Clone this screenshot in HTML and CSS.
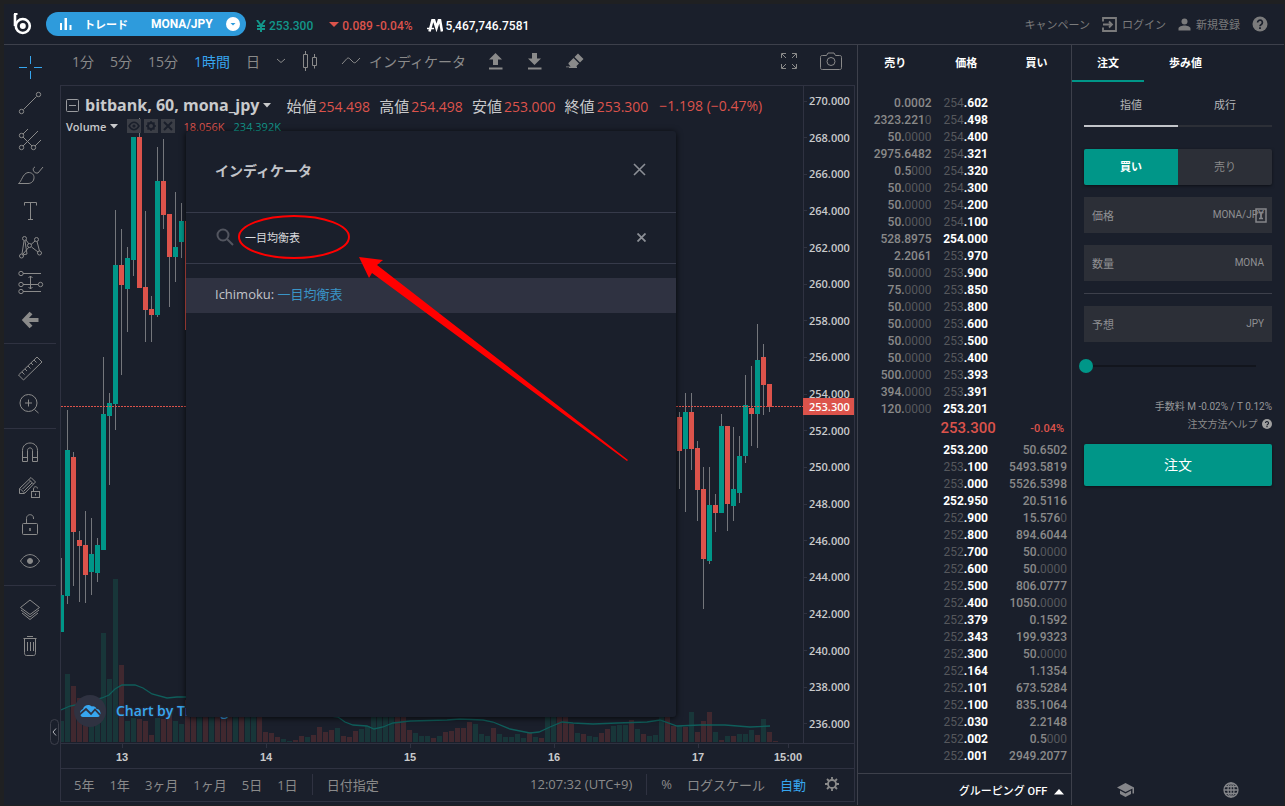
FILE: index.html
```html
<!DOCTYPE html>
<html lang="ja">
<head>
<meta charset="utf-8">
<title>bitbank MONA/JPY</title>
<link rel="stylesheet" href="styles.css">
</head>
<body>

<div class="app">

	<header class="header">
		<a class="logo" href="#" aria-label="bitbank">
			<svg width="20" height="22" viewBox="0 0 20 22"><path d="M2 1v12" stroke="#fff" stroke-width="2.600" fill="none"/><path d="M1 1h3.500" stroke="#fff" stroke-width="2"/><circle cx="9.800" cy="13" r="7" stroke="#fff" stroke-width="2.600" fill="none"/><circle cx="9.800" cy="13" r="3" fill="#fff"/></svg>
		</a>
		<button class="pair">
			<svg width="12" height="12" viewBox="0 0 12 12" fill="#fff"><path d="M0 5h2v7H0zM4.500 0h2.500v12H4.500zM9.500 7h2v5h-2z"/></svg>
			<span class="pair-mode">トレード</span>
			<span class="pair-name">MONA/JPY</span>
			<svg width="14" height="14" viewBox="0 0 14 14"><circle cx="7" cy="7" r="7" fill="#fff"/><path d="M4.500 6h5L7 8.500z" fill="#2e9bdc"/></svg>
		</button>
		<span class="ticker up">
			<svg width="10" height="12" viewBox="0 0 10 12"><path d="M1 0l4 5.500L9 0M5 5v7M1 6h8M1 9h8" fill="none" stroke="#12968a" stroke-width="2"/></svg>
			253.300
		</span>
		<span class="ticker down">
			<svg width="10" height="10" viewBox="0 0 10 10"><path d="M0 1h10L5 6z" fill="#dc534b"/></svg>
			0.089 -0.04%
		</span>
		<span class="ticker balance">
			<svg width="16" height="13" viewBox="0 0 16 13"><path d="M2.500 12.500L5.500 1h1.500l2.500 8 2.500-8h1l2 11.500" fill="none" stroke="#fff" stroke-width="2.600"/><path d="M0 9.500h7" stroke="#fff" stroke-width="1.500"/></svg>
			5,467,746.7581
		</span>
		<nav class="menu">
			<a href="#">キャンペーン</a>
			<a href="#"><svg width="15" height="15" viewBox="0 0 15 15" fill="none" stroke="#7b7b7c" stroke-width="1.800"><path d="M1 4.500V1h13v13H1v-3.500M1 7.500h8.500M7 4.500l3 3-3 3"/></svg>ログイン</a>
			<a href="#"><svg width="13" height="13" viewBox="0 0 13 13" fill="#7b7b7c"><circle cx="6.500" cy="3.500" r="3"/><path d="M0.500 12.500v-2c0-2 3.500-3 6-3s6 1 6 3v2z"/></svg>新規登録</a>
			<a href="#" aria-label="ヘルプ"><svg width="16" height="16" viewBox="0 0 16 16"><circle cx="8" cy="8" r="7.500" fill="#7b7b7c"/><path d="M5.600 6.500a2.400 2.400 0 1 1 3.700 2C8.300 9.100 8 9.400 8 10.300" fill="none" stroke="#1a1f2b" stroke-width="1.700"/><path d="M7.100 11.300h1.800V13H7.100z" fill="#1a1f2b"/></svg></a>
		</nav>
	</header>

	<main class="main">

		<section class="widget">
			<div class="tools">
				<button class="tool active" aria-label="十字"><svg viewBox="0 0 28 28"><path d="M14.500 3v8M14.500 18v8M3 14.500h8M18 14.500h8"/></svg></button>
				<button class="tool" aria-label="トレンドライン"><svg viewBox="0 0 28 28"><path d="M7.500 20.500l13-13"/><circle cx="5.500" cy="22.500" r="2.200"/><circle cx="22.500" cy="5.500" r="2.200"/></svg></button>
				<button class="tool" aria-label="ピッチフォーク"><svg viewBox="0 0 28 28"><path d="M7 9L12 4M7 21L22 6M19 21l6-6M7 12l9 9"/><circle cx="5.500" cy="10.500" r="2.200"/><circle cx="5.500" cy="22.500" r="2.200"/><circle cx="17.500" cy="22.500" r="2.200"/></svg></button>
				<button class="tool" aria-label="ブラシ"><svg viewBox="0 0 28 28"><path d="M2.500 22.500c3-1.500 4-10 9.500-11 4 0 6 2 6 5 0 4-3 6-6 6zM19 6c-3 1-2 5 1 6h2l5-6"/></svg></button>
				<button class="tool" aria-label="テキスト"><svg viewBox="0 0 28 28"><path d="M8.500 8.500v-3h12v3M14.500 5.500v17M12 22.500h5"/></svg></button>
				<button class="tool" aria-label="パターン"><svg viewBox="0 0 28 28"><path d="M6 21l2-13M9 8l2 13-4.500 1M10 7l3 4M19 8l-4 3.500M21 8.500l2.500 9.500M7 21l6-7M15.500 14l6.500 5"/><circle cx="8.500" cy="5.500" r="2"/><circle cx="20.500" cy="6.500" r="2"/><circle cx="13.500" cy="12.500" r="2"/><circle cx="5.500" cy="23" r="2"/><circle cx="23.500" cy="20" r="2"/></svg></button>
				<button class="tool" aria-label="予測"><svg viewBox="0 0 28 28"><path d="M7 4.500h18M7 15.500h15M7 22.500h18M14.500 7v13M12.500 9l2-2 2 2M12.500 18l2 2 2-2"/><circle cx="5" cy="4.500" r="2.200"/><circle cx="5" cy="15.500" r="2.200"/><circle cx="24.500" cy="15.500" r="2.200"/><circle cx="5" cy="22.500" r="2.200"/></svg></button>
				<button class="tool" aria-label="矢印"><svg viewBox="0 0 28 28"><path d="M15 8l-6.500 7 6.500 7M9 15h13.500" stroke-width="4"/></svg></button>
				<hr>
				<button class="tool" aria-label="定規"><svg viewBox="0 0 28 28"><path d="M2.500 21L21 3l5 5L7.500 26zM6 18l2.500 2.500M9 15l2 2M12 12l2.500 2.500M15 9l2 2M18 6l2.500 2.500"/></svg></button>
				<button class="tool" aria-label="拡大"><svg viewBox="0 0 28 28"><circle cx="12.500" cy="13" r="8.500"/><path d="M12.500 9.500v7M9 13h7M18.500 19.500l4 3.500"/></svg></button>
				<hr>
				<button class="tool" aria-label="マグネット"><svg viewBox="0 0 28 28"><path d="M6.500 22.500v-11c0-10 15-10 15 0v11h-5v-11c0-3.500-5-3.500-5 0v11zM6.500 18.500h5M16.500 18.500h5"/></svg></button>
				<button class="tool" aria-label="描画モード"><svg viewBox="0 0 28 28"><path d="M3.500 18.500v-5L15 2.500l4.500 4.500-11 11.500zM13 4.500l4.500 4.500M4 13.500l4.500 4.500M6.500 14l8-8M8 16l8-8"/><rect x="15.500" y="16.500" width="8" height="6"/><path d="M17.500 16.500V14c0-3 4-3 4-.5M19.500 18.500v2"/></svg></button>
				<button class="tool" aria-label="ロック"><svg viewBox="0 0 28 28"><rect x="6.500" y="12.500" width="15" height="11" rx="1"/><path d="M10.500 12.500V7.500c0-5 7-5 7-.5v1"/><path d="M14 17v3" stroke-width="1.600"/></svg></button>
				<button class="tool" aria-label="表示"><svg viewBox="0 0 28 28"><path d="M4.500 14c5-8.500 14-8.500 19 0-5 8.500-14 8.500-19 0z"/><circle cx="14" cy="14" r="2.500" fill="#8a8a8a"/></svg></button>
				<hr>
				<button class="tool" aria-label="レイヤー"><svg viewBox="0 0 28 28"><path d="M4.500 11.500l9.500-7.500 9.500 7.500-9.500 7zM5 14l9 7 9-7M6 17l8 6.500 8-6.500"/></svg></button>
				<button class="tool" aria-label="削除"><svg viewBox="0 0 28 28"><path d="M7.500 6.500h13M11 4.500h6M8.500 6.500v14c0 2 .5 3 2 3h7c1.500 0 2-1 2-3v-14M11.500 10v9M14.500 10v9M17.500 10v9"/></svg></button>
			</div>

			<div class="chart-side">
				<div class="topbar">
					<button>1分</button>
					<button>5分</button>
					<button>15分</button>
					<button class="active">1時間</button>
					<button>日</button>
					<button aria-label="時間足"><svg width="10" height="6" viewBox="0 0 10 6"><path d="M1 1l4 3.500L9 1"/></svg></button>
					<button class="kind" aria-label="チャート種類"><svg width="14" height="20" viewBox="0 0 14 20"><path d="M.5 3.500h4v13h-4zM2.500 0v3.500M2.500 16.500V20M9.500 6.500h4v8h-4zM11.500 3v3.500M11.500 14.500v3"/></svg></button>
					<button class="indicator"><svg width="20" height="10" viewBox="0 0 20 10"><path d="M1 8l5-5.500c1-.8 2-.6 3 .5l3 3c1 1 2 1 3 .2L19 2"/></svg>インディケータ</button>
					<button class="solid" aria-label="保存"><svg width="15" height="17" viewBox="0 0 15 17"><path d="M7.500 0L14 6.500h-4V12H5V6.500H1zM1 14.500h13.500v2H1z"/></svg></button>
					<button class="solid" aria-label="読込"><svg width="15" height="17" viewBox="0 0 15 17"><path d="M5 0h5v5.500h4L7.500 12 1 5.500h4zM1 14.500h13.500v2H1z"/></svg></button>
					<button class="solid" aria-label="消去"><svg width="18" height="16" viewBox="0 0 18 16"><path d="M12 .5L17.500 6 14 9.500 8.500 4zM7.500 5L13 10.500l-3.500 3.500H5L2.500 11v-1zM0 13.500h11V15H3v-.7H0z"/></svg></button>
					<span class="spacer"></span>
					<button class="full" aria-label="全画面"><svg width="18" height="18" viewBox="0 0 18 18"><path d="M1.500 6V1.500H6M12 1.500h4.500V6M16.500 12v4.500H12M6 16.500H1.500V12M2 2l4 4M16 2l-4 4M16 16l-4-4M2 16l4-4"/></svg></button>
					<button class="camera" aria-label="スナップショット"><svg width="22" height="18" viewBox="0 0 22 18"><path d="M2.500 3.500h4L8 1h6l1.500 2.500h4c1.500 0 2 .5 2 2v10c0 1.500-.5 2-2 2h-17c-1.500 0-2-.5-2-2v-10c0-1.500.5-2 2-2z"/><circle cx="11" cy="9.500" r="4"/></svg></button>
				</div>

				<div class="chart-box">
					<div class="pane">
						<svg class="plot" id="plot" viewBox="61 86 742 657" preserveAspectRatio="none"></svg>
						<div class="legend">
							<div class="legend-main">
								<svg width="13" height="13" viewBox="0 0 13 13" fill="none" stroke="#9a9b9f"><rect x=".5" y=".5" width="12" height="12" rx="1"/><path d="M3 6.500h7"/></svg>
								<strong>bitbank, 60, mona_jpy</strong>
								<svg width="8" height="5" viewBox="0 0 8 5"><path d="M0 0h8L4 4.500z" fill="#c9cacc"/></svg>
								<span class="ohlc">始値<b>254.498</b></span>
								<span class="ohlc">高値<b>254.498</b></span>
								<span class="ohlc">安値<b>253.000</b></span>
								<span class="ohlc">終値<b>253.300</b></span>
								<span class="ohlc"><b>−1.198 (−0.47%)</b></span>
							</div>
							<div class="legend-volume">
								<strong>Volume</strong>
								<svg width="8" height="5" viewBox="0 0 8 5"><path d="M0 0h8L4 4.500z" fill="#c9cacc"/></svg>
								<span class="study-icons">
									<svg width="14" height="14" viewBox="0 0 14 14"><rect width="14" height="14" fill="#3b3e46"/><path d="M2 7c3-5 7-5 10 0-3 5-7 5-10 0z" fill="none" stroke="#1a1f2b" stroke-width="1.500"/><circle cx="7" cy="7" r="1.600" fill="#1a1f2b"/></svg>
									<svg width="14" height="14" viewBox="0 0 14 14"><rect width="14" height="14" fill="#3b3e46"/><circle cx="7" cy="7" r="3" fill="none" stroke="#1a1f2b" stroke-width="2"/><path d="M7 2v2M7 10v2M2 7h2M10 7h2M3.500 3.500l1.500 1.500M9 9l1.500 1.500M10.500 3.500L9 5M5 9l-1.500 1.500" stroke="#1a1f2b" stroke-width="1.500"/></svg>
									<svg width="14" height="14" viewBox="0 0 14 14"><rect width="14" height="14" fill="#3b3e46"/><path d="M3 3l8 8M11 3l-8 8" stroke="#1a1f2b" stroke-width="2"/></svg>
								</span>
								<span class="red">18.056K</span>
								<span class="green">234.392K</span>
							</div>
						</div>
						<a class="credit" href="#">
							<span class="credit-logo"><svg width="22" height="14" viewBox="0 0 22 14"><path d="M1 9c0-2 1-3 3-4 1-4 6-5.500 9-2.500 2-.5 4 .5 4.500 2.500 2.500 0 4 2 4 4.500 0 2-1 3.500-3 3.500H4c-2 0-3-2-3-4z" fill="#37a6ef"/><path d="M0 11l7-6 5 5 4-4.500 7 7.500" fill="none" stroke="#2f3241" stroke-width="1.800"/></svg></span>
							<span>Chart by TradingView</span>
						</a>
					</div>
					<div class="price-axis">
						<span>270.000</span><span>268.000</span><span>266.000</span><span>264.000</span><span>262.000</span><span>260.000</span><span>258.000</span><span>256.000</span><span>254.000</span><span>252.000</span><span>250.000</span><span>248.000</span><span>246.000</span><span>244.000</span><span>242.000</span><span>240.000</span><span>238.000</span><span>236.000</span>
						<em>253.300</em>
					</div>
					<div class="time-axis">
						<span>13</span><span>14</span><span>15</span><span>16</span><span>17</span><span>15:00</span>
					</div>
					<div class="bottombar">
						<button>5年</button>
						<button>1年</button>
						<button>3ヶ月</button>
						<button>1ヶ月</button>
						<button>5日</button>
						<button>1日</button>
						<i></i>
						<button>日付指定</button>
						<span class="spacer"></span>
						<span>12:07:32 (UTC+9)</span>
						<i></i>
						<button>%</button>
						<button>ログスケール</button>
						<button class="active">自動</button>
						<button class="gear" aria-label="設定"><svg width="14" height="14" viewBox="0 0 14 14" fill="none" stroke="#8a8a8a"><circle cx="7" cy="7" r="4" stroke-width="1.800"/><path d="M7 0v3M7 11v3M0 7h3M11 7h3M2 2l2 2M10 10l2 2M12 2l-2 2M4 10l-2 2" stroke-width="1.800"/></svg></button>
					</div>
				</div>
			</div>

			<button class="collapse" aria-label="閉じる"><svg width="5" height="8" viewBox="0 0 5 8"><path d="M4 .5L1 4l3 3.500" fill="none" stroke="#b0b2b8"/></svg></button>

			<div class="dialog" role="dialog" aria-labelledby="dialog-title">
				<div class="dialog-head">
					<h2 id="dialog-title">インディケータ</h2>
					<button aria-label="閉じる"><svg width="13" height="13" viewBox="0 0 13 13"><path d="M1 1l11 11M12 1L1 12" stroke="#8c8f96" stroke-width="1.600"/></svg></button>
				</div>
				<div class="dialog-search">
					<svg width="18" height="18" viewBox="0 0 18 18" fill="none" stroke="#52555f" stroke-width="2"><circle cx="7" cy="7" r="5.500"/><path d="M11 11l6 6"/></svg>
					<input type="text" value="一目均衡表" aria-label="検索">
					<button aria-label="クリア"><svg width="9" height="9" viewBox="0 0 9 9"><path d="M.5 .5l8 8M8.500 .5l-8 8" stroke="#8c8f96" stroke-width="1.800"/></svg></button>
				</div>
				<a class="result" href="#">Ichimoku: <em>一目均衡表</em></a>
			</div>
		</section>

		<section class="book">
			<table>
				<thead><tr><th>売り</th><th>価格</th><th>買い</th></tr></thead>
				<tbody id="asks"></tbody>
				<tbody><tr class="last"><td></td><td>253.300</td><td>-0.04%</td></tr></tbody>
				<tbody id="bids"></tbody>
			</table>
			<button class="grouping">グルーピング OFF <svg width="10" height="6" viewBox="0 0 10 6"><path d="M0 5.500h10L5 0z" fill="#fff"/></svg></button>
		</section>

		<section class="order">
			<div class="tabs">
				<button class="active">注文</button>
				<button>歩み値</button>
			</div>
			<form class="order-form">
				<div class="types">
					<button type="button" class="active">指値</button>
					<button type="button">成行</button>
				</div>
				<div class="sides">
					<button type="button" class="active">買い</button>
					<button type="button">売り</button>
				</div>
				<div class="field">
					<label for="price">価格</label>
					<input id="price" type="text">
					<span>MONA/JPY</span>
					<svg class="keypad" width="12" height="15" viewBox="0 0 12 15"><rect x="1" y="1" width="10" height="13" fill="none" stroke="#85868a" stroke-width="1.500"/><path d="M3.500 4.500h5M6 4.500v6M4 10.500h4" stroke="#85868a" stroke-width="1.500"/></svg>
				</div>
				<div class="field">
					<label for="amount">数量</label>
					<input id="amount" type="text">
					<span>MONA</span>
				</div>
				<hr>
				<div class="field">
					<label for="total">予想</label>
					<input id="total" type="text">
					<span>JPY</span>
				</div>
				<input class="ratio" type="range" min="0" max="100" value="0" aria-label="割合">
				<p class="fee">手数料 M -0.02% / T 0.12%</p>
				<p class="help"><a href="#">注文方法ヘルプ <svg width="10" height="10" viewBox="0 0 16 16"><circle cx="8" cy="8" r="8" fill="#a0a0a0"/><path d="M5.600 6.500a2.400 2.400 0 1 1 3.700 2C8.300 9.100 8 9.400 8 10.300" fill="none" stroke="#1a1f2b" stroke-width="1.800"/><path d="M7 11.300h2V13H7z" fill="#1a1f2b"/></svg></a></p>
				<button type="submit" class="submit">注文</button>
			</form>
			<footer class="links">
				<a href="#" aria-label="ガイド"><svg width="17" height="14" viewBox="0 0 17 14" fill="#85868a"><path d="M8.500 0L17 4.500v6h-1.500V5.500L8.500 9 0 4.500zM3 7.500L8.500 10.500 14 7.500v3.500l-5.500 3L3 11z"/></svg></a>
				<a href="#" aria-label="言語"><svg width="16" height="16" viewBox="0 0 16 16" fill="none" stroke="#85868a" stroke-width="1.300"><circle cx="8" cy="8" r="7"/><ellipse cx="8" cy="8" rx="3" ry="7"/><path d="M8 1v14M1 8h14M2 4.500h12M2 11.500h12"/></svg></a>
			</footer>
		</section>

	</main>
</div>

<svg class="marks" width="640" height="480" viewBox="0 0 640 480" aria-hidden="true">
	<ellipse cx="294" cy="237" rx="55" ry="21" fill="none" stroke="#f00" stroke-width="2"/>
	<path d="M359 257l24 3-6 5 251 195-1 1-255-188-3 5z" fill="#f00"/>
</svg>

<script src="script.js"></script>
</body>
</html>
```

FILE: styles.css
```css
*{
	box-sizing: border-box;
}

body{
	margin: 0;
	padding: 4px 1px 1px 4px;
	height: 100vh;
	background: #1f2022;
	color: #8a8a8a;
	font-family: Roboto, "Noto Sans CJK JP", sans-serif;
	font-size: 12px;
}

button{
	border: 0;
	padding: 0;
	background: none;
	color: inherit;
	font: inherit;
	white-space: nowrap;
	cursor: pointer;
}

a{
	color: inherit;
	text-decoration: none;
}

svg{
	flex: none;
}

.app{
	height: 100%;
	display: flex;
	flex-direction: column;
	background: #1a1f2b;
}

.spacer{
	flex: 1;
}

/* header */

.header{
	flex: none;
	height: 41px;
	display: flex;
	align-items: center;
	padding: 0 16px 0 8px;
	border-bottom: 1px solid #3d404b;
	white-space: nowrap;
}

.logo{
	display: flex;
	padding-left: 1px;
}

.pair{
	display: flex;
	align-items: center;
	width: 200px;
	height: 24px;
	margin-left: 13px;
	padding: 0 6px 0 14px;
	border-radius: 12px;
	background: #2e9bdc;
	color: #fff;
	font-weight: 700;
}

.pair-mode{
	font-size: 11px;
	margin-left: 12px;
}

.pair-name{
	flex: 1;
	margin-left: 23px;
	text-align: left;
	font-size: 12px;
}

.ticker{
	display: flex;
	align-items: center;
	gap: 3px;
	padding-top: 3px;
	font-size: 12px;
	font-weight: 500;
}

.up{
	margin-left: 10px;
	color: #12968a;
}

.down{
	margin-left: 16px;
	color: #dc534b;
}

.balance{
	margin-left: 14px;
	color: #fff;
}

.menu{
	display: flex;
	align-items: center;
	gap: 12px;
	margin-left: auto;
	font-size: 11px;
	color: #7b7b7c;
}

.menu a{
	display: flex;
	align-items: center;
	gap: 5px;
}

/* main columns */

.main{
	flex: 1;
	min-height: 0;
	display: grid;
	grid-template-columns: minmax(0, 1fr) 214px 213px;
}

.widget{
	position: relative;
	display: flex;
	min-height: 0;
	font-family: "Open Sans", "Noto Sans CJK JP", sans-serif;
}

.tools{
	width: 52px;
	margin-right: 4px;
	padding-top: 4px;
}

.tool{
	display: flex;
	align-items: center;
	justify-content: center;
	width: 100%;
	height: 36px;
}

.tool svg{
	width: 28px;
	height: 28px;
	fill: none;
	stroke: #8a8a8a;
}

.tool.active svg{
	stroke: #37a6ef;
}

.tools hr{
	margin: 6px 0;
	border: 0;
	border-top: 1px solid #2f3241;
}

.chart-side{
	flex: 1;
	min-width: 0;
	display: flex;
	flex-direction: column;
	padding: 0 2px 3px 0;
}

.topbar{
	height: 40px;
	flex: none;
	display: flex;
	align-items: center;
	gap: 16px;
	padding: 0 13px 8px 12px;
	font-size: 14px;
}

.topbar svg{
	display: block;
	fill: none;
	stroke: #8a8a8a;
}

.topbar .solid{
	margin-left: 8px;
}

.topbar .solid svg{
	fill: #8a8a8a;
	stroke: none;
}

.topbar .full{
	margin-right: 6px;
}

.kind{
	margin-left: 1px;
}

.indicator{
	display: flex;
	align-items: center;
	gap: 8px;
	margin-left: 8px;
}

.topbar .indicator + .solid{
	margin-left: 6px;
}

.active{
	color: #37a6ef;
}

.chart-box{
	flex: 1;
	min-height: 0;
	display: grid;
	grid-template-columns: minmax(0, 1fr) 51px;
	grid-template-rows: minmax(0, 1fr) 25px 33px;
	border: 1px solid #2f3241;
}

.pane{
	position: relative;
	overflow: hidden;
}

.plot{
	display: block;
	width: 100%;
	height: 100%;
}

.legend{
	position: absolute;
	left: 5px;
	top: 8px;
	color: #c9cacc;
	white-space: nowrap;
}

.legend-main{
	display: flex;
	align-items: center;
	gap: 4px;
	height: 22px;
	font-size: 15px;
}

.legend-main strong{
	padding-left: 2px;
	font-size: 16px;
	font-weight: 700;
}

.ohlc{
	margin-left: 5px;
}

.legend-main svg + .ohlc{
	margin-left: 11px;
}

.ohlc b{
	margin-left: 2px;
	color: #dc534b;
	font-weight: 400;
	font-size: 14px;
}

.legend-volume{
	display: flex;
	align-items: center;
	gap: 4px;
	height: 20px;
	font-size: 11px;
}

.legend-volume strong{
	font-weight: 600;
}

.study-icons{
	display: flex;
	gap: 3px;
	margin: 0 4px 0 5px;
}

.red{
	color: #dc534b;
}

.green{
	margin-left: 5px;
	color: #12968a;
}

.credit{
	position: absolute;
	left: 13px;
	bottom: 16px;
	display: flex;
	align-items: center;
	gap: 10px;
	color: #37a6ef;
	font-size: 14px;
	font-weight: 600;
	line-height: 16px;
	text-shadow: 0 0 3px #2f3241, 0 0 2px #2f3241;
	white-space: nowrap;
}

.credit-logo{
	display: flex;
	align-items: center;
	justify-content: center;
	width: 32px;
	height: 32px;
	border-radius: 50%;
	background: #2f3241;
}

.price-axis{
	position: relative;
	display: flex;
	flex-direction: column;
	justify-content: space-between;
	padding: 7px 0 11px;
	border-left: 1px solid #2f3241;
	color: #c9cacc;
	font-size: 11px;
	font-weight: 600;
	line-height: 16px;
}

.price-axis span{
	display: flex;
	align-items: center;
	gap: 2px;
}

.price-axis span::before{
	content: "";
	width: 3px;
	height: 1px;
	background: #2f3241;
}

.price-axis em{
	position: absolute;
	left: -1px;
	top: 312px;
	width: 51px;
	padding-left: 6px;
	background: #dc534b;
	color: #fff;
	font-style: normal;
	line-height: 17px;
}

.time-axis{
	grid-column: 1 / 3;
	display: grid;
	grid-template-columns: 133fr 144fr 144fr 144fr 144fr 36fr 48fr;
	border-top: 1px solid #2f3241;
	color: #c9cacc;
	font: bold 11px "Liberation Sans", sans-serif;
	text-align: center;
}

.time-axis span::before{
	content: "";
	display: block;
	width: 1px;
	height: 4px;
	margin: 0 auto 3px;
	background: #2f3241;
}

.time-axis span:first-child{
	padding-right: 11px;
}

.bottombar{
	grid-column: 1 / 3;
	display: flex;
	align-items: center;
	gap: 15px;
	padding: 0 15px 2px 13px;
	border-top: 1px solid #2f3241;
	font-size: 13px;
	white-space: nowrap;
}

.bottombar i{
	width: 1px;
	height: 21px;
	margin-left: -1px;
	margin-right: -1px;
	background: #2f3241;
}

.gear{
	margin-left: 4px;
}

.gear svg{
	display: block;
}

.collapse{
	position: absolute;
	left: 46px;
	bottom: 60px;
	width: 9px;
	height: 26px;
	display: flex;
	align-items: center;
	justify-content: center;
	border: 1px solid #3d404b;
	border-radius: 5px;
	background: #1a1f2b;
}

/* indicator search */

.dialog{
	position: absolute;
	left: 182px;
	top: 86px;
	bottom: 88px;
	width: 490px;
	border-radius: 3px;
	background: #1a1f2b;
	box-shadow: 0 1px 6px rgba(0, 0, 0, .8);
	color: #c2c4c9;
}

.dialog-head{
	display: flex;
	align-items: center;
	justify-content: space-between;
	height: 82px;
	padding: 0 30px 4px 29px;
	border-bottom: 1px solid #363a4a;
}

.dialog h2{
	margin: 0;
	font-size: 14px;
	font-weight: 700;
}

.dialog-head svg,
.dialog-search svg{
	display: block;
}

.dialog-search{
	display: flex;
	align-items: center;
	height: 51px;
	padding: 0 30px 2px;
	margin-bottom: 14px;
	border-bottom: 1px solid #363a4a;
}

.dialog-search input{
	flex: 1;
	min-width: 0;
	margin-left: 11px;
	padding: 0;
	border: 0;
	outline: 0;
	background: none;
	color: #d8d9dc;
	font: 11px "Noto Sans CJK JP", sans-serif;
}

.result{
	display: block;
	padding: 0 29px 2px;
	background: #2f3241;
	font-size: 13px;
	line-height: 33px;
}

.result em{
	color: #3a94c6;
	font-style: normal;
}

/* order book */

.book{
	display: flex;
	flex-direction: column;
	border-left: 1px solid #3d404b;
}

.book table{
	width: 100%;
	border-collapse: collapse;
	table-layout: fixed;
}

.book th{
	height: 50px;
	padding: 9px 0 0;
	vertical-align: top;
	color: #fff;
	font-size: 11px;
	font-weight: 700;
}

.book th:nth-child(1){
	width: 35%;
}

.book th:nth-child(2){
	width: 26%;
	padding-left: 12px;
}

.book th:nth-child(3){
	padding-left: 14px;
}

.book td{
	height: 17px;
	padding: 0;
	font-size: 12px;
	font-weight: 500;
	line-height: 17px;
	text-align: right;
}

.book td:first-child{
	padding-right: 1px;
}

.book td:last-child{
	padding-right: 4px;
}

.book td b{
	color: #fff;
	font-weight: 700;
}

.dim{
	color: #56585d;
	font-weight: 400;
}

.book .last td{
	height: 24px;
	padding-bottom: 3px;
	color: #dc534b;
	font-size: 11px;
	line-height: 21px;
}

.book .last td:nth-child(2){
	padding-left: 8px;
	font-size: 15px;
	text-align: left;
	white-space: nowrap;
}

.book .last td:last-child{
	padding-right: 7px;
}

.grouping{
	margin-top: auto;
	height: 32px;
	padding-right: 7px;
	border-top: 1px solid #3d404b;
	color: #fff;
	font-size: 11px;
	font-weight: 500;
	text-align: right;
}

.grouping svg{
	margin-left: 4px;
}

/* order form */

.order{
	display: flex;
	flex-direction: column;
	border-left: 1px solid #3d404b;
}

.tabs{
	display: flex;
	height: 37px;
	color: #fff;
	font-size: 11px;
	font-weight: 700;
}

.tabs button{
	min-width: 72px;
	padding: 0 25px 2px;
	border-bottom: 2px solid transparent;
}

.tabs .active{
	color: #fff;
	border-color: #009688;
}

.order-form{
	display: flex;
	flex-direction: column;
	padding: 0 12px;
}

.types{
	display: flex;
	height: 45px;
	font-size: 11px;
	color: #b4b5b8;
}

.types button{
	flex: 1;
	border-bottom: 2px solid #2c2f37;
}

.types .active{
	color: #b4b5b8;
	border-color: #c2c4c9;
}

.sides{
	display: flex;
	height: 36px;
	margin: 22px 0 12px;
	border-radius: 2px;
	overflow: hidden;
	background: #2c2f37;
	box-shadow: 0 1px 3px rgba(0, 0, 0, .5);
	font-size: 11px;
}

.sides button{
	flex: 1;
	padding-bottom: 2px;
}

.sides .active{
	background: #009688;
	color: #fff;
	font-weight: 700;
}

.field{
	position: relative;
	display: flex;
	align-items: center;
	height: 36px;
	margin-bottom: 12px;
	padding: 0 8px 1px;
	background: #2c2f37;
	color: #8f9093;
	font-size: 11px;
}

.field input{
	flex: 1;
	min-width: 0;
	border: 0;
	outline: 0;
	background: none;
	color: #fff;
}

.field span{
	font-size: 10px;
}

.keypad{
	position: absolute;
	right: 5px;
	top: 11px;
}

.order-form hr{
	width: 100%;
	margin: 0 0 12px;
	border: 0;
	border-top: 1px solid #3d404b;
}

.ratio{
	appearance: none;
	width: calc(100% - 11px);
	height: 14px;
	margin: 5px 0 25px -5px;
	background: linear-gradient(#12151d, #12151d) center / 100% 2px no-repeat;
}

.ratio::-webkit-slider-thumb{
	appearance: none;
	width: 14px;
	height: 14px;
	border-radius: 50%;
	background: #009688;
}

.fee,
.help{
	margin: 0;
	font-size: 10px;
	line-height: 18px;
	text-align: right;
}

.fee{
	color: #96979a;
}

.help svg{
	margin-left: 2px;
	vertical-align: -1px;
}

.submit{
	height: 42px;
	margin-top: 10px;
	padding-bottom: 3px;
	border-radius: 2px;
	background: #009688;
	box-shadow: 0 1px 3px rgba(0, 0, 0, .5);
	color: #fff;
	font-size: 14px;
}

.links{
	display: flex;
	justify-content: space-around;
	align-items: center;
	height: 30px;
	margin-top: auto;
}

.links svg{
	display: block;
}

.marks{
	position: absolute;
	left: 0;
	top: 0;
	pointer-events: none;
}
```

FILE: script.js
```javascript
// left, high, low, body top, body bottom, u = up / d = down
const candles = [
	[59, 558, 632, 595, 632, "u"],
	[65, 410, 604, 450, 596, "u"],
	[71, 452, 586, 457, 532, "d"],
	[77, 531, 602, 540, 546, "d"],
	[83, 511, 603, 545, 575, "d"],
	[89, 518, 595, 554, 572, "u"],
	[95, 538, 582, 545, 573, "u"],
	[101, 357, 550, 414, 550, "u"],
	[107, 393, 485, 403, 416, "u"],
	[113, 210, 430, 265, 404, "u"],
	[119, 229, 375, 265, 285, "d"],
	[125, 247, 332, 258, 289, "u"],
	[131, 137, 276, 137, 260, "u"],
	[137, 118, 288, 137, 288, "d"],
	[143, 211, 342, 287, 310, "d"],
	[149, 296, 342, 309, 315, "d"],
	[155, 147, 317, 181, 315, "u"],
	[161, 139, 229, 181, 215, "d"],
	[167, 214, 307, 214, 257, "d"],
	[173, 192, 282, 247, 257, "u"],
	[179, 203, 258, 221, 242, "u"],
	[185, 221, 330, 221, 330, "d"],
	[677, 412, 489, 417, 451, "d"],
	[683, 393, 512, 412, 449, "u"],
	[689, 393, 470, 412, 449, "d"],
	[695, 441, 521, 448, 490, "d"],
	[701, 467, 609, 489, 559, "d"],
	[707, 467, 564, 505, 561, "u"],
	[713, 494, 532, 505, 513, "d"],
	[719, 414, 513, 426, 513, "u"],
	[725, 426, 531, 426, 504, "d"],
	[731, 427, 521, 489, 506, "u"],
	[737, 436, 503, 456, 493, "u"],
	[743, 375, 463, 405, 456, "u"],
	[749, 366, 446, 408, 414, "d"],
	[755, 324, 448, 360, 414, "u"],
	[761, 344, 415, 357, 385, "d"],
	[767, 384, 412, 384, 407, "d"]
]

// height of each volume bar, one bar every 6 units from 59
const volumes = ("u21 u68 d56 d44 d42 u37 u37 u109 u63 u163 d77 u21 u24 d23 d21 d7 u24 d23 d29 u21 u18 " +
	"d42 d38 u32 d34 u30 d32 d30 d30 u32 d34 u36 u30 d30 d10 d9 d5 u3 u1 d2 d6 u5 d7 d15 d10 d12 u14 d6 d5 d11 u13 u16 " +
	"u28 u32 u34 u30 d30 d28 d12 u9 u6 u6 d4 u6 d10 d11 d14 d14 d20 u18 u8 u6 d14 u8 u5 u5 u8 u4 d10 u5 d4 u28 u30 d32 " +
	"d28 d18 u9 d8 u6 u5 d9 d13 u16 u17 u17 d22 u13 d8 u6 u7 u26 d26 d16 u16 d15 u30 d10 d21 d30 u10 d2 u6 d6 u8 u8 u12 d7 u23 d10 d1").split(" ")

const average = "61,710 70,706 80,704 102,698 109,695 115,689 122,685 135,685 143,688 152,694 167,698 177,697 186,697 " +
	"338,717 345,722 353,725 367,726 374,729 383,727 393,723 410,721 447,720 460,719 483,720 493,722 510,729 530,733 " +
	"539,732 550,727 562,722 573,723 593,724 617,723 647,722 660,720 677,726 700,725 725,725 750,727 770,726"

function rect(x, y, w, h, fill){
	return `<rect x="${x}" y="${y}" width="${w}" height="${h}" fill="${fill}"/>`
}

function draw_plot(){
	let out = ""
	volumes.forEach((v, i) => {
		let h = Number(v.slice(1))
		out += rect(59 + i * 6, 742 - h, 5, h, v[0] == "u" ? "#183639" : "#40282f")
	})
	out += `<polyline points="${average}" fill="none" stroke="#0f5e5b" stroke-width="1.300"/>`
	for (let [x, high, low, top, bottom, dir] of candles){
		out += rect(x + 2, high, 1, low - high, "#74767b")
		out += rect(x, top, 5, bottom - top, dir == "u" ? "#009688" : "#dc534b")
	}
	out += `<path d="M61 406.500H803" stroke="#dc534b" stroke-dasharray="2 1"/>`
	document.getElementById("plot").innerHTML = out
}

// a price with a star is drawn in full brightness
const asks = [
	["254.602", "0.0002"], ["254.498", "2323.2210"], ["254.400", "50.0000"], ["254.321", "2975.6482"],
	["254.320", "0.5000"], ["254.300", "50.0000"], ["254.200", "50.0000"], ["254.100", "50.0000"],
	["*254.000", "528.8975"], ["253.970", "2.2061"], ["253.900", "50.0000"], ["253.850", "75.0000"],
	["253.800", "50.0000"], ["253.600", "50.0000"], ["253.500", "50.0000"], ["253.400", "50.0000"],
	["253.393", "500.0000"], ["253.391", "394.0000"], ["*253.201", "120.0000"]
]

const bids = [
	["*253.200", "50.6502"], ["253.100", "5493.5819"], ["253.000", "5526.5398"], ["*252.950", "20.5116"],
	["252.900", "15.5760"], ["252.800", "894.6044"], ["252.700", "50.0000"], ["252.600", "50.0000"],
	["252.500", "806.0777"], ["252.400", "1050.0000"], ["252.379", "0.1592"], ["252.343", "199.9323"],
	["252.300", "50.0000"], ["252.164", "1.1354"], ["252.101", "673.5284"], ["252.100", "835.1064"],
	["252.030", "2.2148"], ["252.002", "0.5000"], ["252.001", "2949.2077"]
]

function price_cell(p){
	if (p[0] == "*") return `<td><b>${p.slice(1)}</b></td>`
	return `<td><span class="dim">${p.slice(0, 3)}</span><b>${p.slice(3)}</b></td>`
}

function amount_cell(a){
	return `<td>${a.replace(/(0+)$/, '<span class="dim">$1</span>')}</td>`
}

function draw_book(){
	document.getElementById("asks").innerHTML = asks.map(r => `<tr>${amount_cell(r[1])}${price_cell(r[0])}<td></td></tr>`).join("")
	document.getElementById("bids").innerHTML = bids.map(r => `<tr><td></td>${price_cell(r[0])}${amount_cell(r[1])}</tr>`).join("")
}

draw_plot()
draw_book()
```
